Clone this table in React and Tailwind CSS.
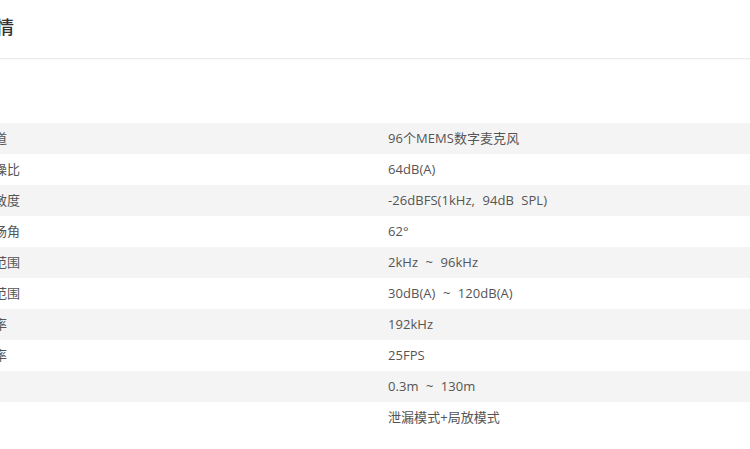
import React from "react";

const rows = [
  ["声学通道", "96个MEMS数字麦克风"],
  ["声学信噪比", "64dB(A)"],
  ["声学灵敏度", "-26dBFS(1kHz, 94dB SPL)"],
  ["成像视场角", "62°"],
  ["音频率范围", "2kHz ~ 96kHz"],
  ["声压级范围", "30dB(A) ~ 120dB(A)"],
  ["采样频率", "192kHz"],
  ["成像帧率", "25FPS"],
  ["测距", "0.3m ~ 130m"],
  ["模式", "泄漏模式+局放模式"],
];

export default function App() {
  return (
    <div
      className="w-[750px] h-[449px] overflow-hidden bg-white"
      style={{ fontFamily: '"Open Sans", "Noto Sans CJK SC", sans-serif' }}
    >
      <div className="h-[59px] border-b border-[#ececec] shadow-[0_1px_2px_rgba(0,0,0,0.03)] flex items-center">
        <h2 className="-ml-[22px] -mt-[4px] text-[18px] leading-none font-medium text-[#333]">
          详情
        </h2>
      </div>
      <div className="pt-[64px] -ml-[45px]">
        {rows.map(([k, v], i) => (
          <div
            key={i}
            className={
              "flex h-[31px] items-center text-[13px] text-[#555] " +
              (i % 2 === 0 ? "bg-[#f4f4f4]" : "bg-white")
            }
          >
            <div className="w-[433px] shrink-0 whitespace-nowrap">{k}</div>
            <div className="whitespace-nowrap [word-spacing:4px] tracking-[0.05px]">{v}</div>
          </div>
        ))}
      </div>
    </div>
  );
}
